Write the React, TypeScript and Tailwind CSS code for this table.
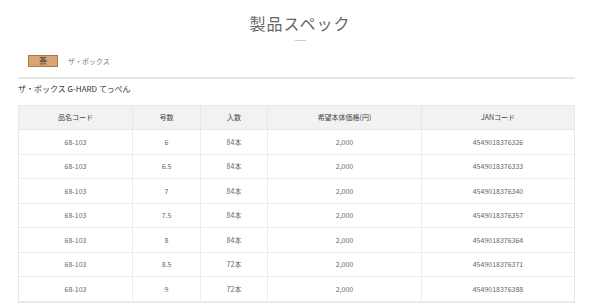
import React from "react";

const rows = [
  ["68-103", "6", "84本", "2,000", "4549018376326"],
  ["68-103", "6.5", "84本", "2,000", "4549018376333"],
  ["68-103", "7", "84本", "2,000", "4549018376340"],
  ["68-103", "7.5", "84本", "2,000", "4549018376357"],
  ["68-103", "8", "84本", "2,000", "4549018376364"],
  ["68-103", "8.5", "72本", "2,000", "4549018376371"],
  ["68-103", "9", "72本", "2,000", "4549018376388"],
];

const headers = ["品名コード", "号数", "入数", "希望本体価格(円)", "JANコード"];
const widths = ["w-[114px]", "w-[68px]", "w-[67px]", "w-[154px]", "flex-1"];

export default function App() {
  return (
    <div
      className="w-[600px] h-[304px] overflow-hidden bg-white text-[#555]"
      style={{ fontFamily: '"Noto Sans CJK JP", "Noto Sans", sans-serif' }}
    >
      <div className="flex flex-col items-center pt-[12px]">
        <h1 className="text-[16px] leading-[22px] text-[#666] tracking-[1px] font-normal">製品スペック</h1>
        <div className="mt-[6px] w-[11px] h-px bg-[#ccc]" />
      </div>
      <div className="flex items-center mt-[14px] ml-[28px] h-[12px]">
        <div className="w-[30px] h-[12px] bg-[#d9a571] border border-[#a87a50] flex items-center justify-center text-[8px] leading-none text-[#333]">
          茶
        </div>
        <span className="ml-[10px] text-[7px] text-[#777]">ザ・ボックス</span>
      </div>
      <div className="mx-[18px] mt-[10px] w-[557px] h-[2px] bg-[#e6e6e6]" />
      <div className="ml-[18px] mt-[4px] text-[8px] leading-[12px] text-[#333]">ザ・ボックス G-HARD てっぺん</div>
      <div className="ml-[18px] mt-[10px] w-[557px] border border-[#e8e8e8]">
        <div className="flex h-[24px] bg-[#f2f2f2] border-b border-[#e6e6e6]">
          {headers.map((h, i) => (
            <div
              key={h}
              className={`${widths[i]} flex items-center justify-center text-[7px] text-[#444] ${i < 4 ? "border-r border-[#e6e6e6]" : ""}`}
            >
              {h}
            </div>
          ))}
        </div>
        {rows.map((r, ri) => (
          <div key={ri} className="flex h-[24.5px] border-b border-[#ececec]">
            {r.map((c, i) => (
              <div
                key={i}
                className={`${widths[i]} flex items-center justify-center text-[7px] text-[#666] ${i < 4 ? "border-r border-[#ececec]" : ""}`}
              >
                {c}
              </div>
            ))}
          </div>
        ))}
      </div>
    </div>
  );
}
